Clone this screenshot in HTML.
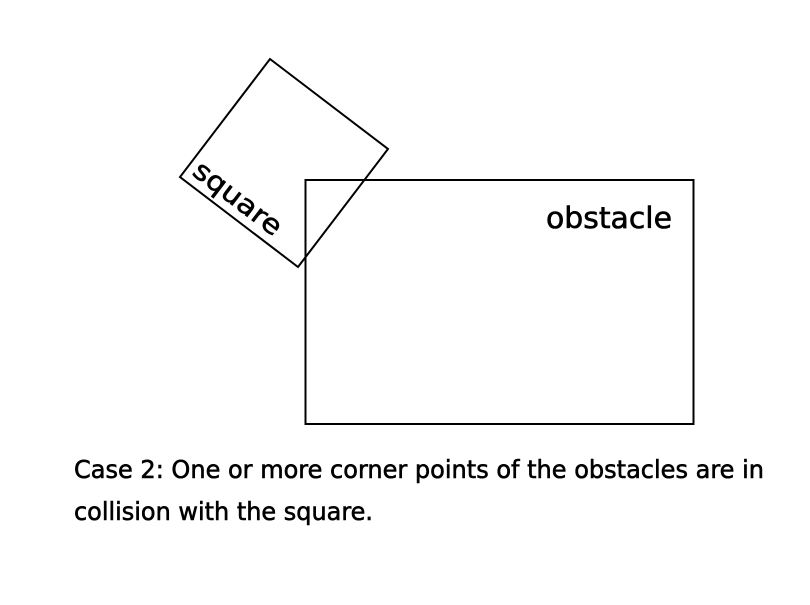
<!DOCTYPE html>
<html><head><style>html,body{margin:0;padding:0;background:#fff;}svg{display:block}</style></head>
<body>
<svg width="810" height="605" viewBox="0 0 810 605" xmlns="http://www.w3.org/2000/svg">
<rect width="810" height="605" fill="#fff"/>
<polygon points="270,59 388,149 298,267 180,177" fill="none" stroke="#000" stroke-width="2"/>
<rect x="305.5" y="180" width="388" height="244" fill="none" stroke="#000" stroke-width="2"/>
<g font-family="DejaVu Sans, sans-serif" stroke="#000" stroke-width="0.6">
<text x="546" y="228" font-size="29" textLength="126" lengthAdjust="spacingAndGlyphs">obstacle</text>
<text transform="translate(191,174) rotate(37.3)" font-size="27" textLength="104" lengthAdjust="spacingAndGlyphs">square</text>
<text x="74" y="478" font-size="25" textLength="690" lengthAdjust="spacingAndGlyphs">Case 2: One or more corner points of the obstacles are in</text>
<text x="74" y="520" font-size="25" textLength="299" lengthAdjust="spacingAndGlyphs">collision with the square.</text>
</g>
</svg>
</body></html>
